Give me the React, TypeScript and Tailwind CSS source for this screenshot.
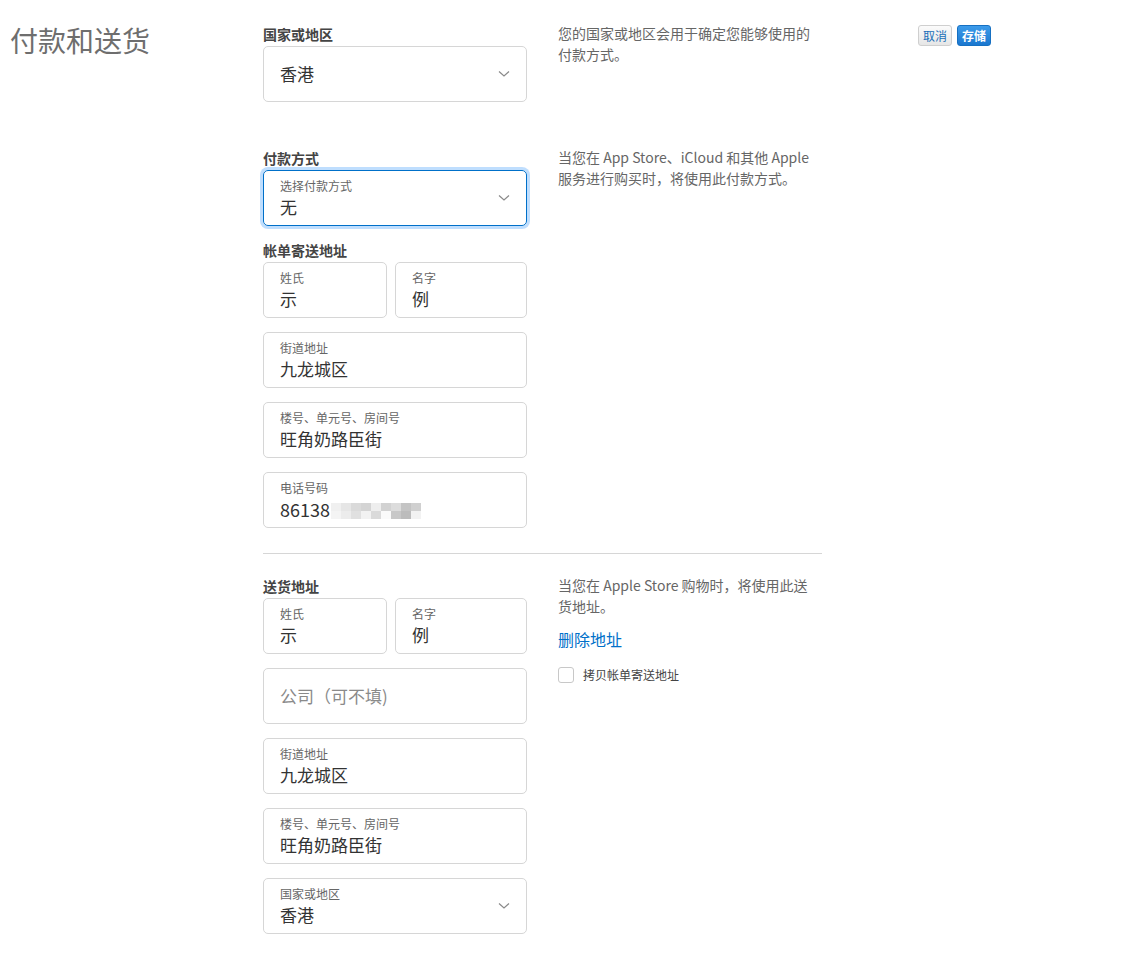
import React from "react";

const font = { fontFamily: '"Noto Sans CJK SC", "Liberation Sans", sans-serif' };

function Chevron() {
  return (
    <svg width="12" height="8" viewBox="0 0 12 8" className="shrink-0">
      <path d="M1 1.5 L6 6 L11 1.5" fill="none" stroke="#8a8a8a" strokeWidth="1.2" />
    </svg>
  );
}

function Field({ label, value, className = "", select = false, children }: { label: string; value?: string; className?: string; select?: boolean; children?: React.ReactNode }) {
  return (
    <div className={`h-[56px] border border-[#d6d6d6] rounded-[5px] bg-white flex items-center pl-4 pr-4 ${className}`}>
      <div className="flex-1 flex flex-col">
        <div className="text-[12px] leading-[16px] text-[#666]">{label}</div>
        <div className="text-[17px] leading-[22px] text-[#333] flex items-center mt-[2px]">{value}{children}</div>
      </div>
      {select && <Chevron />}
    </div>
  );
}

function Label({ children }: { children: React.ReactNode }) {
  return <div className="text-[14px] leading-[16px] font-bold text-[#444] mb-[4px]">{children}</div>;
}

function Desc({ children }: { children: React.ReactNode }) {
  return <div className="text-[14px] leading-[21px] text-[#666] w-[262px] -mt-[3px]">{children}</div>;
}

const blur = [
  ["#f0f0f0", "#e6e6e6", "#dadada", "#d4d4d4", "#eeeeee", "#d2d2d2", "#dcdcdc", "#c4c4c4", "#d0d0d0"],
  ["#f4f4f4", "#ececec", "#e0e0e0", "#f2f2f2", "#dadada", "#fafafa", "#c8c8c8", "#bcbcbc", "#f2f2f2"],
];

export default function App() {
  return (
    <div className="bg-white w-[1145px] min-h-[966px] flex" style={font}>
      <div className="w-[263px] shrink-0 pl-[10px] pt-[21px]">
        <div className="text-[28px] leading-[38px] text-[#6e6e6e]">付款和送货</div>
      </div>
      <div className="w-[559px] shrink-0 pt-[26px] pb-[30px]">
        {/* country */}
        <div className="flex">
          <div className="w-[264px] shrink-0">
            <Label>国家或地区</Label>
            <div className="h-[56px] border border-[#d6d6d6] rounded-[5px] flex items-center pl-4 pr-4">
              <div className="flex-1 text-[17px] text-[#333]">香港</div>
              <Chevron />
            </div>
          </div>
          <div className="ml-[31px]">
            <Desc>您的国家或地区会用于确定您能够使用的付款方式。</Desc>
          </div>
        </div>

        {/* payment */}
        <div className="flex mt-[48px]">
          <div className="w-[264px] shrink-0">
            <Label>付款方式</Label>
            <div className="h-[56px] border border-[#0070c9] rounded-[5px] shadow-[0_0_0_3px_rgba(0,125,250,0.25)] flex items-center pl-4 pr-4">
              <div className="flex-1 flex flex-col">
                <div className="text-[12px] leading-[16px] text-[#666]">选择付款方式</div>
                <div className="text-[17px] leading-[22px] text-[#333] mt-[2px]">无</div>
              </div>
              <Chevron />
            </div>
            <div className="mt-[16px]">
              <Label>帐单寄送地址</Label>
            </div>
            <div className="flex gap-[8px]">
              <Field label="姓氏" value="示" className="w-[124px]" />
              <Field label="名字" value="例" className="flex-1" />
            </div>
            <div className="flex flex-col gap-[14px] mt-[14px]">
              <Field label="街道地址" value="九龙城区" />
              <Field label="楼号、单元号、房间号" value="旺角奶路臣街" />
              <Field label="电话号码">
                <span className="text-[18px]">86138</span>
                <span className="flex flex-col ml-[1px] mt-[3px]">
                  {blur.map((row, i) => (
                    <span key={i} className="flex">
                      {row.map((c, j) => (
                        <span key={j} className="w-[10px] h-[8px]" style={{ background: c }} />
                      ))}
                    </span>
                  ))}
                </span>
              </Field>
            </div>
          </div>
          <div className="ml-[31px]">
            <Desc>当您在 App Store、iCloud 和其他 Apple 服务进行购买时，将使用此付款方式。</Desc>
          </div>
        </div>

        <div className="h-px bg-[#d6d6d6] mt-[25px]" />

        {/* shipping */}
        <div className="flex mt-[24px]">
          <div className="w-[264px] shrink-0">
            <Label>送货地址</Label>
            <div className="flex gap-[8px]">
              <Field label="姓氏" value="示" className="w-[124px]" />
              <Field label="名字" value="例" className="flex-1" />
            </div>
            <div className="flex flex-col gap-[14px] mt-[14px]">
              <div className="h-[56px] border border-[#d6d6d6] rounded-[5px] flex items-center pl-4">
                <div className="text-[17px] text-[#8a8a8a]">公司（可不填)</div>
              </div>
              <Field label="街道地址" value="九龙城区" />
              <Field label="楼号、单元号、房间号" value="旺角奶路臣街" />
              <Field label="国家或地区" value="香港" select />
            </div>
          </div>
          <div className="ml-[31px]">
            <Desc>当您在 Apple Store 购物时，将使用此送货地址。</Desc>
            <div className="text-[16px] leading-[22px] text-[#0070c9] mt-[11px]">删除地址</div>
            <div className="flex items-center mt-[17px]">
              <div className="w-[16px] h-[16px] border border-[#c8c8c8] rounded-[3px] bg-white" />
              <div className="ml-[9px] text-[12px] leading-[16px] text-[#444]">拷贝帐单寄送地址</div>
            </div>
          </div>
        </div>
      </div>

      <div className="ml-[96px] pt-[25px] flex gap-[5px] items-start">
        <div className="h-[21px] px-[4px] flex items-center rounded-[3px] border border-[#cfcfcf] bg-gradient-to-b from-[#fbfbfb] to-[#e6e6e6] text-[12px] text-[#1a6fb8]">取消</div>
        <div className="h-[21px] px-[4px] flex items-center rounded-[3px] border border-[#1670c2] bg-gradient-to-b from-[#3c9bea] to-[#1a77cf] text-[12px] font-bold text-white">存储</div>
      </div>
    </div>
  );
}
